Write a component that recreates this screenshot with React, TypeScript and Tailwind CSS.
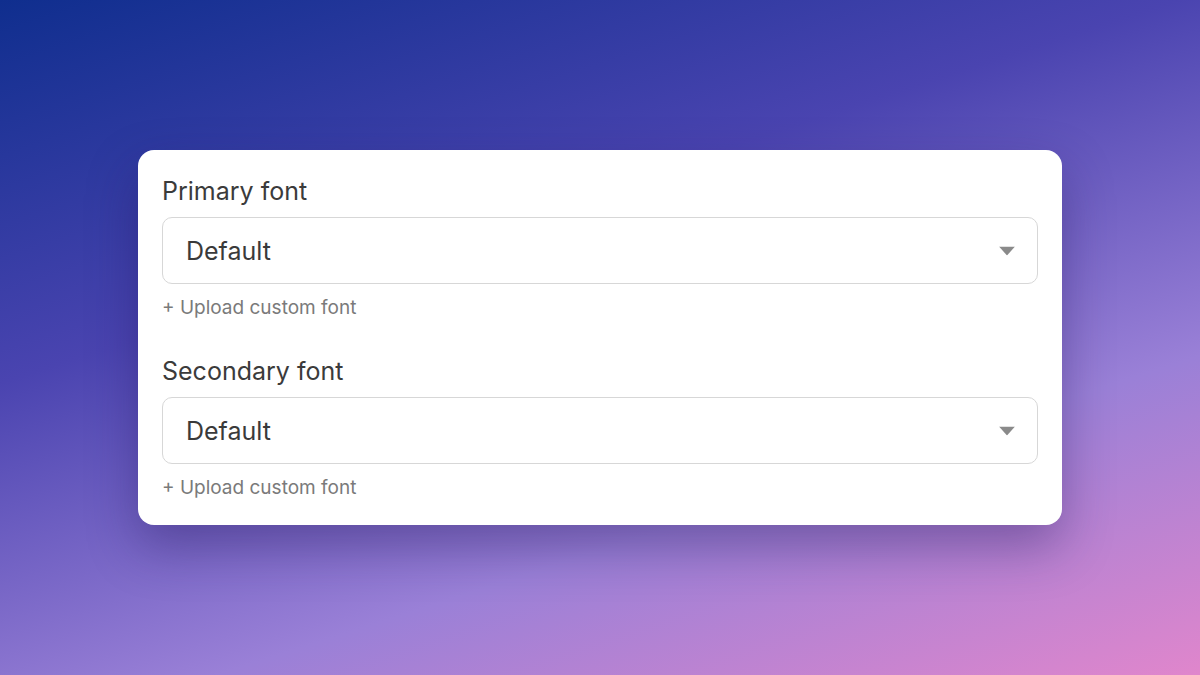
import { useState } from "react";

const fonts = ["Default", "Inter", "Roboto", "Lato", "Open Sans"];

function FontField({ label }: { label: string }) {
  const [value, setValue] = useState("Default");
  return (
    <div className="flex flex-col">
      <p className="text-[25px] leading-[32px] text-[#3b3b3b]">{label}</p>
      <div className="relative mt-[10px] h-[67px] rounded-[10px] border-[1.5px] border-[#d7d7d7] bg-white">
        <select
          value={value}
          onChange={(e) => setValue(e.target.value)}
          className="h-full w-full cursor-pointer appearance-none bg-transparent pl-[23px] pr-12 text-[25px] leading-[32px] text-[#3a3a3a] outline-none"
        >
          {fonts.map((f) => (
            <option key={f} value={f}>
              {f}
            </option>
          ))}
        </select>
        <svg
          className="pointer-events-none absolute right-[22px] top-1/2 -translate-y-1/2"
          width="16"
          height="9"
          viewBox="0 0 16 9"
        >
          <path d="M0 0h16L8 9z" fill="#8a8a8a" />
        </svg>
      </div>
      <button className="mt-[12px] self-start text-[19px] leading-[24px] text-[#7a7a7a] hover:text-[#555]">
        + Upload custom font
      </button>
    </div>
  );
}

export default function App() {
  return (
    <div
      className="flex h-[675px] w-full items-center justify-center bg-[linear-gradient(162deg,#0f2e8e_0%,#4a44b0_36%,#9a80d7_70%,#e086cc_100%)]"
      style={{ fontFamily: "Inter, 'Noto Sans', sans-serif" }}
    >
      <div className="flex w-[924px] flex-col gap-[35px] rounded-[16px] bg-white px-[24px] pb-[25px] pt-[25px] shadow-[0_22px_50px_rgba(35,20,90,0.38)]">
        <FontField label="Primary font" />
        <FontField label="Secondary font" />
      </div>
    </div>
  );
}
